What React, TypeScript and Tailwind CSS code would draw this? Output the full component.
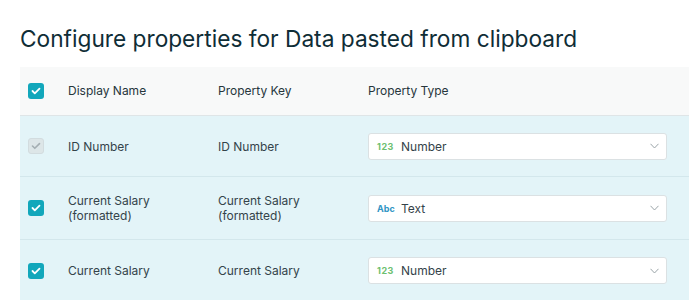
type Row = {
  name: string;
  key: string;
  type: "number" | "text";
  disabled?: boolean;
  h: string;
};

const rows: Row[] = [
  { name: "ID Number", key: "ID Number", type: "number", disabled: true, h: "h-[61px]" },
  { name: "Current Salary\n(formatted)", key: "Current Salary\n(formatted)", type: "text", h: "h-[63px]" },
  { name: "Current Salary", key: "Current Salary", type: "number", h: "h-[62px]" },
];

const Check = ({ disabled }: { disabled?: boolean }) =>
  disabled ? (
    <div className="w-4 h-4 rounded-[3px] bg-[#dde6e8] border border-[#d2dcdf] flex items-center justify-center">
      <svg width="10" height="8" viewBox="0 0 10 8" fill="none">
        <path d="M1.5 4l2.3 2.3L8.5 1.6" stroke="#a4aeb2" strokeWidth="1.6" strokeLinecap="round" strokeLinejoin="round" />
      </svg>
    </div>
  ) : (
    <div className="w-4 h-4 rounded-[3px] bg-[#12a7bb] flex items-center justify-center">
      <svg width="10" height="8" viewBox="0 0 10 8" fill="none">
        <path d="M1.5 4l2.3 2.3L8.5 1.6" stroke="#ffffff" strokeWidth="1.8" strokeLinecap="round" strokeLinejoin="round" />
      </svg>
    </div>
  );

const TypeSelect = ({ type }: { type: "number" | "text" }) => (
  <div className="h-[27px] w-[299px] bg-white border border-[#dbe1e3] rounded-[3px] flex items-center pl-2 pr-[7px]">
    {type === "number" ? (
      <span className="text-[9px] font-bold text-[#6cc070] tracking-[0.5px] w-6">123</span>
    ) : (
      <span className="text-[9px] font-bold text-[#2f95c4] w-6">Abc</span>
    )}
    <span className="text-[12px] text-[#34434a]">{type === "number" ? "Number" : "Text"}</span>
    <svg className="ml-auto" width="9" height="6" viewBox="0 0 9 6" fill="none">
      <path d="M0.5 0.8L4.5 5L8.5 0.8" stroke="#9aa4a8" strokeWidth="1" />
    </svg>
  </div>
);

export default function App() {
  return (
    <div className="w-[689px] h-[300px] overflow-hidden bg-white font-['Inter',sans-serif]">
      <h1 className="pl-[20px] pt-[24px] text-[22.7px] leading-[29px] text-[#0f2d36]">
        Configure properties for Data pasted from clipboard
      </h1>
      <div className="ml-[20px] mt-[14px]">
        <div className="h-[49px] bg-[#f8f9f9] border-b border-[#dfe5e7] grid grid-cols-[48px_150px_150px_1fr] items-center text-[12px] text-[#26363c]">
          <div className="pl-2">
            <Check />
          </div>
          <div>Display Name</div>
          <div>Property Key</div>
          <div>Property Type</div>
        </div>
        {rows.map((r, i) => (
          <div
            key={i}
            className={`${r.h} bg-[#e3f4f8] border-b border-[#d3e7ec] grid grid-cols-[48px_150px_150px_1fr] items-center text-[12px] leading-[15px] text-[#34434a]`}
          >
            <div className="pl-2">
              <Check disabled={r.disabled} />
            </div>
            <div className="whitespace-pre-line">{r.name}</div>
            <div className="whitespace-pre-line">{r.key}</div>
            <div>
              <TypeSelect type={r.type} />
            </div>
          </div>
        ))}
      </div>
    </div>
  );
}
